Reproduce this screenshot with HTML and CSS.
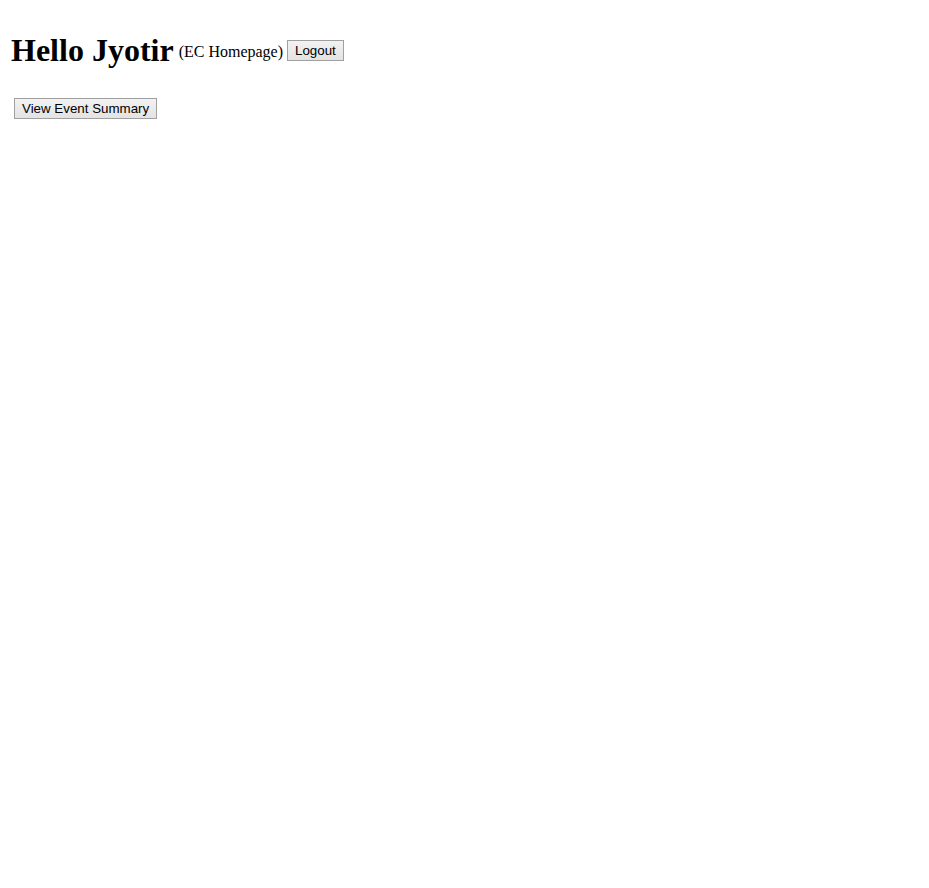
FILE: index.html
```html
<!DOCTYPE html>
<html>
<head>
<meta charset="utf-8">
<link rel="stylesheet" href="styles.css">
</head>
<body>
<h1 class="greeting">Hello Jyotir<span class="sub">(EC Homepage)</span><button class="btn btn-logout">Logout</button></h1>
<div class="actions">
  <button class="btn">View Event Summary</button>
</div>
</body>
</html>
```
FILE: styles.css
```css
body {
  margin: 8px;
  font-family: "Liberation Serif", "Times New Roman", serif;
  color: #000;
  background: #fff;
}
.greeting {
  font-size: 32px;
  font-weight: bold;
  margin: 24px 0 0 3px;
}
.sub {
  font-size: 16px;
  font-weight: normal;
  margin-left: 5px;
  vertical-align: 4px;
}
.btn {
  font-family: "Liberation Sans", Arial, sans-serif;
  font-size: 13.33px;
  font-weight: normal;
  color: #000;
  background: linear-gradient(#f2f2f2, #e3e3e3);
  border: 1px solid #a0a0a0;
  border-radius: 0;
  padding: 2px 7px;
  height: 21px;
  line-height: 15px;
}
.btn-logout {
  margin-left: 4px;
  vertical-align: 6px;
}
.actions {
  padding: 29px 0 0 6px;
}
```
